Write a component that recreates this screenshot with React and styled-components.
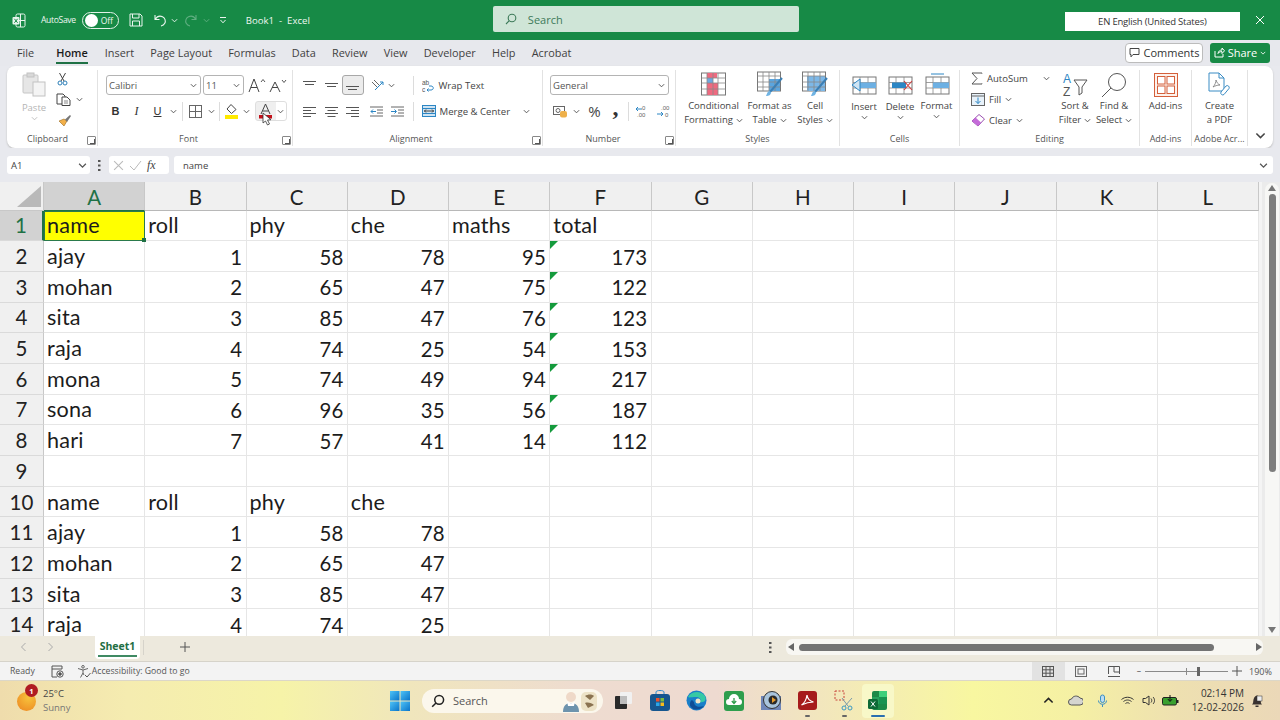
import React from 'react';
import styled, { createGlobalStyle } from 'styled-components';

const Global = createGlobalStyle`
  html, body { margin: 0; padding: 0; background: #fff; }
  * { box-sizing: border-box; }
  svg { display: block; flex: none; }
`;
const UI = `"Open Sans", "Noto Sans", sans-serif`;

const Page = styled.div`
  width: 1280px; height: 720px; overflow: hidden; display: flex; flex-direction: column;
  font-family: ${UI}; background: #e8e9ee; color: #333;
`;
/* ---- title bar ---- */
const TitleBar = styled.header`
  height: 40px; background: #178a46; display: flex; align-items: center; color: #fff; flex: none;
`;
const TitleItem = styled.div`
  margin-left: ${p => p.$ml || 0}px; display: flex; align-items: center; font-size: ${p => p.$fs || 8.6}px; white-space: nowrap; color: #eef7f1;
`;
const AutoSaveText = styled.span` letter-spacing: -0.35px; `;
const Toggle = styled.div`
  width: 37px; height: 17px; border: 1px solid #e3f1e8; border-radius: 9px; margin-left: 6px; display: flex; align-items: center;
  padding-left: 2px; gap: 3px; font-size: 8.5px; color: #eef7f1;
  &::before { content: ''; width: 13px; height: 13px; border-radius: 50%; background: #fff; }
`;
const SearchBox = styled.div`
  width: 306px; height: 26px; margin-left: 183px; background: #cfe5d7; border-radius: 2px; display: flex; align-items: center;
  padding-left: 12px; gap: 11px; font-size: 11px; color: #3d7a59; position: relative; top: -1px;
`;
const LangBox = styled.div`
  width: 175px; height: 19px; margin-left: 266px; background: #fff; color: #333; font-size: 9.5px; display: flex; align-items: center;
  justify-content: center; letter-spacing: -0.2px; position: relative; top: 1px;
`;
const CloseBtn = styled.div` margin-left: 15px; `;
/* ---- tabs ---- */
const TabRow = styled.nav`
  height: 26px; display: flex; align-items: center; padding: 0 0 1px 17px; flex: none; background: #e7e8ed;
`;
const Tab = styled.div`
  font-size: 10.9px; color: ${p => p.$active ? '#1a1a1a' : '#3f3f3f'}; font-weight: ${p => p.$active ? 600 : 400}; margin-right: ${p => p.$first ? 22 : p.$active ? 17 : 16.2}px; position: relative; white-space: nowrap;
  ${p => p.$active ? `&::after { content:''; position:absolute; left:0; right:0; bottom:-4px; height:2px; background:#1f7145; }` : ''}
`;
const TabRight = styled.div` margin-left: auto; display: flex; gap: 7px; padding-right: 10px; `;
const CommentBtn = styled.div`
  width: 78px; height: 20px; background: #fff; border: 1px solid #bcbcbc; border-radius: 4px; font-size: 11px; display: flex; align-items: center; justify-content: center; gap: 4px; color: #333;
`;
const ShareBtn = styled.div`
  width: 60px; height: 20px; background: #178a46; color: #fff; border-radius: 3px; font-size: 11px; display: flex; align-items: center; justify-content: center; gap: 3px;
`;
/* ---- ribbon ---- */
const Ribbon = styled.section`
  height: 82px; margin: 0 7px; background: #fff; border-radius: 8px; display: flex; padding-top: 4px; flex: none; box-shadow: 0 1px 2px #bbb;
`;
const Group = styled.div`
  width: ${p => p.$w}px; height: 76px; display: flex; flex-direction: column; position: relative; flex: none;
  border-right: ${p => p.$noline ? 'none' : '1px solid #e2e2e2'};
`;
const GroupBody = styled.div`
  height: 62px; display: flex; flex-direction: ${p => p.$row ? 'row' : 'column'}; padding-left: ${p => p.$pl || 0}px;
  ${p => p.$row ? 'align-items: flex-start;' : 'padding-top: 2px;'}
`;
const GroupLabel = styled.div`
  height: 14px; line-height: 14px; font-size: 9px; color: #555; text-align: center; padding-right: ${p => p.$pr || 0}px; white-space: nowrap;
`;
const Launcher = styled.div`
  position: absolute; right: 1px; bottom: 1px; width: 9px; height: 9px; border: 1px solid #888; border-top-color: #888; border-radius: 1px;
  &::after { content:''; position:absolute; right:0; bottom:0; width:4px; height:4px; border-right:1px solid #555; border-bottom:1px solid #555; }
`;
const ToolRow = styled.div`
  height: 26px; display: flex; align-items: center; gap: ${p => p.$gap || 0}px;
`;
const Combo = styled.div`
  width: ${p => p.$w}px; height: 20px; border: 1px solid #b4b4b4; border-radius: 3px; display: flex; align-items: center; justify-content: space-between;
  padding: 0 3px 0 2px; font-size: 9.5px; color: #555; margin-right: ${p => p.$mr || 0}px; background: #fff;
`;
const Tool = styled.div`
  width: ${p => p.$w || 21}px; height: 20px; margin-left: ${p => p.$ml || 0}px; display: flex; align-items: center; justify-content: center; font-family: "Liberation Serif", serif;
  font-size: 12px; color: #333; flex: none;
  ${p => p.$on ? 'background:#ececec; border:1px solid #a8a8a8; border-radius:3px;' : ''}
`;
const Bold = styled.span` font-family: "Liberation Sans", sans-serif; font-weight: 700; font-size: 11px; `;
const Ital = styled.span` font-style: italic; font-size: 12px; `;
const Under = styled.span` font-family: "Liberation Sans", sans-serif; font-size: 11px; text-decoration: underline; `;
const Sep = styled.div` width: 1px; height: 19px; background: #dcdcdc; margin: 0 ${p => p.$mr ?? p.$m ?? 4}px 0 ${p => p.$ml ?? p.$m ?? 4}px; flex: none; `;
const SplitBox = styled.div`
  display: flex; align-items: center; width: 32px; height: 20px; border: 1px solid #dedede; border-radius: 3px; margin-left: 3px; background: linear-gradient(90deg,#efefef 0 20px,#fff 20px); position: relative;
`;
const Cursor = styled.div` position: absolute; left: 6px; top: 10px; `;
const ToolText = styled.div`
  font-size: 9.6px; color: #444; display: flex; align-items: center; gap: 4px; white-space: nowrap; font-family: ${UI};
`;
const Large = styled.div`
  width: ${p => p.$w}px; display: flex; flex-direction: column; align-items: center; font-size: 9.5px; line-height: 14px; color: #444; flex: none; text-align: center;
  margin-left: ${p => p.$ml || 0}px;
`;
const LargeIcon = styled.div` height: ${p => p.$h || 29}px; display: flex; align-items: center; justify-content: center; margin-bottom: ${p => p.$mb ?? 0}px; `;
const LabelLine = styled.div` display: flex; align-items: center; gap: 3px; white-space: nowrap; height: 14px; `;
const PaleLine = styled(LabelLine)` color: #b5b5b5; `;
const EditRow = styled.div` height: 21px; display: flex; align-items: center; gap: ${p => p.$gap ?? 4}px; font-size: 9.5px; color: #444; white-space: nowrap; padding-left: ${p => p.$pl || 0}px; `;
const RowChev = styled.span` margin-left: ${p => p.$ml || 0}px; `;
const ClipCol = styled.div` display: flex; flex-direction: column; align-items: flex-start; margin-top: -2px; margin-left: ${p => p.$ml || 0}px; width: ${p => p.$w ? p.$w + 'px' : 'auto'}; `;
const Expander = styled.div` flex: 1; display: flex; align-items: flex-end; justify-content: center; padding-bottom: 7px; `;
/* ---- formula bar ---- */
const FormulaBar = styled.div`
  height: 34px; padding: 8px 7px 8px; display: flex; align-items: center; flex: none; font-size: 9.5px; color: #444; background: #e8e9ee;
`;
const NameBox = styled.div`
  width: 83px; height: 18px; background: #fff; border-radius: 3px; display: flex; align-items: center; justify-content: space-between; padding: 0 3px 0 4px;
`;
const Dots = styled.div` width: 19px; display: flex; justify-content: center; `;
const FxBox = styled.div`
  width: 60px; height: 18px; background: #fff; border-radius: 3px; display: flex; align-items: center; padding-left: 4px; gap: 5px; margin-right: 5px;
  font-family: "Liberation Serif", serif; font-style: italic; font-size: 12px; color: #444;
`;
const FxInput = styled.div`
  flex: 1; height: 18px; background: #fff; border-radius: 3px; display: flex; align-items: center; justify-content: space-between; padding: 0 5px 0 9px;
`;
/* ---- sheet ---- */
const SheetArea = styled.main` height: 454px; display: flex; flex: none; background: #fff; `;
const Grid = styled.div`
  width: 1262px; height: 454px; overflow: hidden; display: grid; grid-template-columns: 44px repeat(12, 101.25px) 3px; grid-auto-rows: 30.69px;
  grid-template-rows: 28.5px; align-content: start; font-family: Lato, "Liberation Sans", sans-serif; background: #fff;
`;
const Corner = styled.div`
  background: #f0f0f0; border-right: 1px solid #c8c8c8; border-bottom: 1px solid #c8c8c8; position: relative;
  &::after { content:''; position:absolute; right:2px; bottom:3px; border-style:solid; border-width:0 0 21px 24px; border-color: transparent transparent #b9b9b9 transparent; }
`;
const ColHead = styled.div`
  background: ${p => p.$active ? '#d2d2d2' : '#f0f0f0'}; color: ${p => p.$active ? '#1f7145' : '#222'};
  border-right: 1px solid #c8c8c8; border-bottom: ${p => p.$active ? '1px solid #1f7145' : '1px solid #b8b8b8'};
  display: flex; align-items: center; justify-content: center; font-size: 20.5px; padding-top: 2px;
`;
const RowHead = styled.div`
  background: ${p => p.$active ? '#d2d2d2' : '#f0f0f0'}; color: ${p => p.$active ? '#1f7145' : '#222'};
  border-right: ${p => p.$active ? '2px solid #1f7145' : '1px solid #c8c8c8'}; border-bottom: 1px solid #dadada;
  display: flex; align-items: center; justify-content: center; font-size: 20.5px;
`;
const Cell = styled.div`
  border-right: 1px solid #e6e6e6; border-bottom: 1px solid #e6e6e6; color: #1c1c1c; display: flex; align-items: center; position: relative; white-space: nowrap;
  font-size: ${p => p.$num ? 20.4 : 21.6}px; letter-spacing: ${p => p.$num ? 0 : 0.2}px;
  padding: ${p => p.$num ? '1px 3.5px 0' : '0 3px'};
  justify-content: ${p => p.$num ? 'flex-end' : 'flex-start'};
`;
const SelCell = styled(Cell)`
  background: #ffff00; outline: 1.5px solid #2a7a4c; outline-offset: -1.5px; z-index: 1;
  &::after { content:''; position:absolute; right:-2px; bottom:-2px; width:4px; height:4px; background:#1f7145; }
`;
const Flag = styled.div`
  position: absolute; left: 0; top: 0; border-style: solid; border-width: 8px 8px 0 0; border-color: #149a3c transparent transparent transparent;
`;
const BlankHead = styled.div` background: #f4f4f4; `;
const Blank = styled.div` background: #f4f4f4; `;
const VScroll = styled.div` width: 18px; height: 454px; background: #ebebeb; padding: 1px 1px 0 3px; `;
const VTrack = styled.div`
  height: 100%; background: #f7f7f5; border-radius: 7px 7px 0 0; display: flex; flex-direction: column; align-items: center; padding: 1px 0 2px;
`;
const VThumb = styled.div` width: 7px; height: 278px; background: #7d7d7d; border-radius: 4px; margin: 2px 0 auto; `;
/* ---- sheet tabs ---- */
const SheetBar = styled.div`
  height: 26px; background: #ede9dd; display: flex; align-items: center; flex: none; padding: 0 0 3px 20px; border-bottom: 1px solid #d6d3ca;
`;
const SheetTab = styled.div`
  width: 45px; height: 23px; margin-left: 41px; margin-top: 0; background: #fff; border-radius: 0 0 4px 4px; font-size: 10.5px; font-weight: 700; color: #1f6e43; display: flex; justify-content: center; padding-top: 3px; position: relative;
  &::after { content:''; position:absolute; left:3px; right:3px; bottom:2px; height:2px; background:#3f8a63; }
`;
const SheetSep = styled.div` width: 1px; height: 15px; background: #d6d3ca; margin-left: 3px; `;
const PlusBtn = styled.div` margin-left: 36px; `;
const SheetDots = styled.div` margin-left: 579px; `;
const HScroll = styled.div`
  margin-left: 14px; width: 477px; height: 16px; display: flex; align-items: center; background: #f8f7f3; border-radius: 6px; padding-left: 1px;
`;
const HThumb = styled.div` width: 415px; height: 7px; border-radius: 4px; background: #737373; margin: 0 41px 0 4px; `;
const ArrowGap = styled.span` margin-left: 20px; `;
/* ---- status bar ---- */
const StatusBar = styled.div`
  height: 18px; background: #f3f3f3; display: flex; align-items: center; flex: none; padding-left: 10px; font-size: 8.7px; color: #555;
`;
const StatusIcon = styled.span` margin-left: 16px; `;
const StatusAccess = styled.span` margin-left: 13px; display: flex; align-items: center; gap: 1px; `;
const StatusTail = styled.div` margin-left: auto; display: flex; align-items: center; `;
const ViewBtn = styled.div` width: 33px; height: 18px; display: flex; align-items: center; justify-content: center; background: ${p => p.$on ? '#e2e2e2' : 'transparent'}; `;
const ZoomMinus = styled.span` margin-left: 6px; `;
const Zoom = styled.div` width: 83px; height: 1px; background: #8a8a8a; margin: 0 4px; position: relative; `;
const ZoomTick = styled.div` position: absolute; left: 41px; top: -3px; width: 1px; height: 7px; background: #8a8a8a; `;
const ZoomThumb = styled.div` position: absolute; left: 52px; top: -4px; width: 3px; height: 9px; background: #666; `;
const ZoomPct = styled.div` text-align: right; padding-right: 9px; box-sizing: content-box; width: 22px; margin-left: 7px; font-size: 9px; `;
/* ---- task bar ---- */
const TaskBar = styled.footer`
  height: 40px; flex: none; display: flex; align-items: center; position: relative; font-size: 9.5px;
  background: linear-gradient(90deg, #efdcac 0%, #f5ecb0 10%, #f6f3a8 22%, #f0e6bc 32%, #eedcd0 45%, #eedad0 56%, #f4ecb4 68%, #f8f7a0 76%, #f5f0a4 84%, #eee0b0 92%, #ebd8b8 100%);
  border-top: 1px solid #dcd7c8;
`;
const Weather = styled.div` display: flex; align-items: center; padding-left: 17px; gap: 7px; width: 390px; `;
const Sun = styled.div`
  width: 19px; height: 19px; border-radius: 50%; background: radial-gradient(circle at 60% 30%, #f7c23c, #ec8420); position: relative; margin-top: 2px;
`;
const Badge = styled.div`
  position: absolute; left: 8px; top: -8px; width: 13px; height: 13px; border-radius: 50%; background: #b01c22; color: #fff; font-size: 7.5px; font-weight: 700; display: flex; align-items: center; justify-content: center;
`;
const WeatherText = styled.div` line-height: 14px; font-size: 9.5px; color: #444; `;
const SoftLine = styled.div` color: #777; `;
const TaskSearch = styled.div`
  width: 181px; height: 24px; margin-left: 12px; border-radius: 12px; background: #fbf7ec; display: flex; align-items: center; padding: 0 4px 0 9px; font-size: 11px; color: #555; gap: 8px;
`;
const TaskIcons = styled.div` display: flex; align-items: center; margin-left: 2px; `;
const TaskIcon = styled.div`
  width: ${p => p.$active ? 32 : 36.8}px; height: 34px; display: flex; align-items: center; justify-content: center; position: relative; border-radius: 4px;
  ${p => p.$active ? 'background:#f8f8c8; margin-left:-1px;' : ''}
  ${p => p.$dot ? `&::after { content:''; position:absolute; bottom:1px; left:50%; width:5px; height:2px; margin-left:-2px; border-radius:1px; background:${p.$active ? '#2a6fb0' : '#666'}; ${p.$active ? 'width:14px; margin-left:-7px;' : ''} }` : ''}
`;
const Tray = styled.div` margin-left: auto; display: flex; align-items: center; padding-right: 17px; `;
const TraySlot = styled.div` width: ${p => p.$w || 26}px; display: flex; justify-content: center; `;
const Clock = styled.div` text-align: right; font-size: 10px; line-height: 14px; color: #333; margin: -1px 7px 0 11px; white-space: nowrap; `;
const FaceSpacer = styled.div` margin-left: auto; `;

/* ---- icons ---- */
const Chev = ({ c = '#555', s = 7, up }) => <svg width={s} height={s} viewBox="0 0 8 8"><path d={up ? 'M1 5.500 4 2.500 7 5.500' : 'M1 2.500 4 5.500 7 2.500'} fill="none" stroke={c} strokeWidth="1.100" /></svg>;
const ExcelLogo = () => <svg width="14" height="15" viewBox="0 0 14 15"><rect x="4" y="1" width="9" height="13" rx="1.500" fill="none" stroke="#eaf5ee" /><path d="M8.500 1v13M4 7.500h9" stroke="#eaf5ee" /><rect x="0.500" y="4" width="7" height="7.500" rx="1" fill="#eaf5ee" /><path d="M2.400 5.800 5.600 9.800M5.600 5.800 2.400 9.800" stroke="#178a46" /></svg>;
const Save = () => <svg width="14" height="14" viewBox="0 0 14 14" fill="none" stroke="#eaf5ee"><path d="M1 1h10l2 2v10H1z" /><path d="M3.500 1v4h6.500V1M3.500 13V8h7v5" /></svg>;
const Undo = ({ c = '#eaf5ee', flip }) => <svg width="13" height="13" viewBox="0 0 13 13" fill="none" stroke={c} strokeWidth="1.100"><g transform={flip ? 'translate(13 0) scale(-1 1)' : undefined}><path d="M1 1v4.500h4.500M1.200 5.300C3 2.500 6 1.600 8.500 2.800 11 4 12 7 10.800 9.300 10 10.800 8.600 11.700 7 12" /></g></svg>;
const Qat = () => <svg width="8" height="8" viewBox="0 0 8 8" fill="none" stroke="#eaf5ee"><path d="M1 1.500h6M1.500 4 4 6.800 6.500 4" /></svg>;
const Glass = ({ c = '#3d7a59', s = 12, w = 1.100 }) => <svg width={s} height={s} viewBox="0 0 12 12" fill="none" stroke={c} strokeWidth={w}><circle cx="7" cy="5" r="3.800" /><path d="M4.300 7.700 1 11" /></svg>;
const CloseX = ({ c = '#fff', s = 10 }) => <svg width={s} height={s} viewBox="0 0 10 10"><path d="M1 1 9 9M9 1 1 9" stroke={c} strokeWidth="1" /></svg>;
const Bubble = () => <svg width="11" height="11" viewBox="0 0 11 11" fill="none" stroke="#444"><path d="M1 1.500h9v6H4L2 9.800V7.500H1z" /></svg>;
const ShareIco = () => <svg width="11" height="11" viewBox="0 0 11 11" fill="none" stroke="#fff"><path d="M1 4v6h8V7M4 6.500C4.500 4 6 3 8 3V1l2.500 2.800L8 6.500V4.600C6.300 4.600 5 5 4 6.500z" /></svg>;
const PasteIco = () => <svg width="24" height="25" viewBox="0 0 24 25"><rect x="1" y="3" width="15" height="18" rx="1" fill="#e6e6e6" stroke="#c6c6c6" /><rect x="5" y="1" width="7" height="4" fill="#d8d8d8" stroke="#c2c2c2" /><rect x="11" y="10" width="12" height="14" fill="#f4f4f4" stroke="#c2c2c2" /></svg>;
const Scissors = () => <svg width="11" height="14" viewBox="0 0 11 14" fill="none"><path d="M2.500 1 7 9M8.500 1 4 9" stroke="#444" /><circle cx="3" cy="11" r="2" stroke="#2c7fb8" /><circle cx="8" cy="11" r="2" stroke="#2c7fb8" /></svg>;
const CopyIco = () => <svg width="15" height="13" viewBox="0 0 15 13" fill="none" stroke="#444"><path d="M1 1h6l2 2v8H1z" /><path d="M6 4h5l3 3v5.500H6z" fill="#fff" /><path d="M8 8h4M8 10h4" stroke="#888" /></svg>;
const Painter = () => <svg width="15" height="14" viewBox="0 0 15 14"><path d="M2 7 7 12 10 7 7 5z" fill="#f2b04a" stroke="#9a6a1f" strokeWidth=".6" /><path d="M8 5.500 13 1l1 1-4 6z" fill="#777" /></svg>;
const GrowA = ({ up, s = 13 }) => <svg width="20" height="18" viewBox="0 0 20 18" fill="none" stroke="#444"><path d={`M2 16 7 ${s === 13 ? 3 : 6} 12 16M4 11.500h6`} /><path d={up ? 'M14 6 16 3.500 18 6' : 'M14 4 16 6.500 18 4'} strokeWidth=".9" /></svg>;
const Borders = () => <svg width="13" height="13" viewBox="0 0 13 13" fill="none" stroke="#666"><rect x=".5" y=".5" width="12" height="12" /><path d="M6.500 0v13M0 6.500h13" /></svg>;
const FillIco = () => <svg width="15" height="16" viewBox="0 0 15 16"><path d="M7 1.500 12 6.500 7.500 10.500 3 6z" fill="#fff" stroke="#444" /><rect x="1" y="12" width="13" height="4" fill="#ffea00" /></svg>;
const ColorA = () => <svg width="15" height="16" viewBox="0 0 15 16" fill="none"><path d="M3 11 7.500 1 12 11M4.500 8h6" stroke="#444" /><rect x="1" y="12" width="13" height="3.500" fill="#c3111a" /></svg>;
const Pointer = () => <svg width="10" height="14" viewBox="0 0 10 14"><path d="M1 1v10l2.500-2L5.500 13l2-1-2-4 3.500-.3z" fill="#fff" stroke="#333" strokeWidth=".8" /></svg>;
const Lines = ({ rows, a = 'c' }) => <svg width="13" height="13" viewBox="0 0 13 13" stroke="#555" strokeWidth="1">{rows.map((r, i) => <path key={i} d={`M${a === 'r' ? 13 - r : a === 'c' ? (13 - r) / 2 : 0} ${i * 3 + 2.500}h${r}`} />)}</svg>;
const VLines = ({ y }) => <svg width="13" height="13" viewBox="0 0 13 13" stroke="#555"><path d={`M0 ${y}.5h13M2 ${y + 3}.5h9`} /></svg>;
const Orient = () => <svg width="15" height="13" viewBox="0 0 15 13" fill="none"><path d="M2 3 7 8M4 1 9 6" stroke="#666" /><path d="M5 11 13 3M10 3h3v3" stroke="#2c86c4" /></svg>;
const Indent = ({ r }) => <svg width="13" height="11" viewBox="0 0 13 11" fill="none"><path d="M0 1h13M7 4h6M7 7h6M0 10h13" stroke="#666" /><path d={r ? 'M0 5.500h5M3.500 3.500l2 2-2 2' : 'M6 5.500H1M3 3.500l-2 2 2 2'} stroke="#2c86c4" /></svg>;
const WrapIco = () => <svg width="13" height="13" viewBox="0 0 13 13" fill="none"><text x="0" y="6" fontSize="6.500" fill="#555" fontFamily="Liberation Sans">ab</text><text x="0" y="12.500" fontSize="6.500" fill="#555" fontFamily="Liberation Sans">c</text><path d="M5 11h4c3 0 3-4 0-4H7M6.500 9.500 5 11l1.500 1.500" stroke="#2c86c4" /></svg>;
const MergeIco = () => <svg width="14" height="12" viewBox="0 0 14 12"><rect x=".5" y=".5" width="13" height="11" fill="#cfe4f3" stroke="#2c86c4" /><path d="M.5 3.500h13M.5 8.500h13" stroke="#2c86c4" /><path d="M2 6h10M4 4.500 2.500 6 4 7.500M10 4.500 11.500 6 10 7.500" stroke="#444" fill="none" /></svg>;
const Acct = () => <svg width="15" height="13" viewBox="0 0 15 13"><rect x=".5" y="1.500" width="11" height="8" fill="#fff" stroke="#666" /><circle cx="5" cy="5.500" r="2" fill="none" stroke="#666" /><rect x="7" y="6" width="7" height="6.500" rx="2" fill="#eeb04a" /></svg>;
const Comma = styled.span` font-family: "Liberation Serif", serif; font-weight: 700; font-size: 24px; line-height: 10px; height: 18px; color: #333; `;
const Percent = styled.span` font-family: ${UI}; font-size: 15px; color: #444; `;
const Dec = ({ inc }) => <svg width="14" height="14" viewBox="0 0 14 14" fill="none"><path d={inc ? 'M1 5h6M3 3 1 5l2 2' : 'M7 10H1M5 8l2 2-2 2'} stroke="#2c86c4" /><text x={inc ? 7 : 5} y="6" fontSize="6" fill="#666" fontFamily="Liberation Sans">{inc ? '0' : '.00'}</text><text x={inc ? 2 : 9} y="13" fontSize="6" fill="#666" fontFamily="Liberation Sans">{inc ? '.00' : '0'}</text></svg>;
const CondFmt = () => <svg width="25" height="25" viewBox="0 0 25 25"><rect x=".5" y="1" width="24" height="22" fill="#fff" stroke="#777" /><rect x="6" y="1" width="10" height="5" fill="#ee6a80" /><rect x="6" y="6" width="6" height="5" fill="#6ea8e0" /><rect x="6" y="11" width="11" height="6" fill="#ee6a80" /><rect x="6" y="17" width="11" height="6" fill="#ee6a80" /><path d="M6 1v22M12 1v22M17 1v22M.5 6h24M.5 11h24M.5 17h24" stroke="#888" strokeWidth=".8" /></svg>;
const TableFmt = ({ full }) => <svg width="26" height="27" viewBox="0 0 26 27"><rect x=".5" y="1" width="23" height="19" fill="#fff" stroke="#777" />{full ? <rect x="5" y="5" width="18" height="15" fill="#7db8e8" /> : <rect x="12" y="8" width="11" height="12" fill="#5ba5df" />}<path d="M.5 5h23M.5 11h23M.5 16h23M6 1v19M12 1v19M18 1v19" stroke="#888" strokeWidth=".8" /><path d="M25 7 13 21" stroke="#3b7fb5" strokeWidth="2" /><path d="M9 25c3 0 5-1 5-4l-2-1c-2 1-2 3-3 5z" fill="#6fb3e3" /></svg>;
const CellsIco = ({ kind }) => <svg width="26" height="24" viewBox="0 0 26 24"><rect x="2" y="4" width="23" height="17" fill="#fff" stroke="#777" /><path d="M2 9.500h23M2 15h23M9 4v17M17 4v17" stroke="#888" strokeWidth=".8" />
  {kind === 'ins' && <><rect x="4" y="9.500" width="21" height="5.500" fill="#6db0e3" /><path d="M9 6 1 12l8 6z" fill="#cfe4f3" stroke="#2c86c4" /></>}
  {kind === 'del' && <><rect x="5" y="9.500" width="14" height="5.500" fill="#2c86c4" /><path d="M17 8l8 9M25 8l-8 9" stroke="#d23c3c" strokeWidth="1.100" /></>}
  {kind === 'fmt' && <><rect x="9" y="9.500" width="16" height="5.500" fill="#6db0e3" /><path d="M7 1h13" stroke="#2c86c4" /></>}
</svg>;
const Sigma = () => <svg width="12" height="13" viewBox="0 0 12 13" fill="none" stroke="#555"><path d="M11 1.500V1H1l5 5.500L1 12h10v-.5" /></svg>;
const FillDown = () => <svg width="14" height="13" viewBox="0 0 14 13"><rect x=".5" y=".5" width="13" height="12" fill="#e8f2fa" stroke="#666" /><path d="M.5 3h13" stroke="#666" /><path d="M7 4.500v6M4.500 8 7 10.500 9.500 8" stroke="#2c86c4" fill="none" /></svg>;
const Eraser = () => <svg width="14" height="13" viewBox="0 0 14 13"><path d="M8 .5 13.500 5 7 12 1 7z" fill="#fff" stroke="#9a4fb0" /><path d="M1 7 4.500 3.500 10 8.500 7 12z" fill="#c46bd8" /></svg>;
const SortIco = () => <svg width="27" height="26" viewBox="0 0 27 26"><text x="1" y="11" fontSize="12" fill="#2c86c4" fontFamily="Liberation Sans">A</text><text x="1" y="24" fontSize="12" fill="#555" fontFamily="Liberation Sans">Z</text><path d="M12 8h13l-5 7v6l-3 2v-8z" fill="#fff" stroke="#555" /></svg>;
const BigGlass = () => <svg width="26" height="26" viewBox="0 0 26 26" fill="none" stroke="#555"><circle cx="16" cy="10" r="8.500" /><path d="M10 16 1 25" /></svg>;
const AddIns = () => <svg width="24" height="24" viewBox="0 0 24 24" fill="#fdf2ec" stroke="#d45f3a"><rect x=".5" y=".5" width="23" height="23" /><rect x="3.500" y="3.500" width="7.500" height="7.500" fill="#fff" /><rect x="13" y="3.500" width="7.500" height="7.500" fill="#fff" /><rect x="3.500" y="13" width="7.500" height="7.500" fill="#fff" /><rect x="13" y="13" width="7.500" height="7.500" fill="#fff" /></svg>;
const PdfIco = () => <svg width="23" height="25" viewBox="0 0 23 25" fill="none" stroke="#3a8cc4"><path d="M1 1h10l5 5v13H1z" fill="#fff" /><path d="M11 1v5h5" /><path d="M5 15c2-2 3-5 3-7 1 3 2 4 4 5-3 0-5 1-7 2z" stroke="#777" strokeWidth=".8" /><path d="M13 20l5-6a2 2 0 0 1 3 2.500l-5 6a2 2 0 0 1-3-2.500z" fill="#fff" /></svg>;
const Tick = ({ c = '#bbb' }) => <svg width="13" height="11" viewBox="0 0 13 11" fill="none" stroke={c}><path d="M1 6 5 10 12 1" /></svg>;
const VDots = () => <svg width="3" height="11" viewBox="0 0 3 11" fill="#555"><rect y="0" width="2.500" height="2" /><rect y="4.500" width="2.500" height="2" /><rect y="9" width="2.500" height="2" /></svg>;
const Tri = ({ d, c = '#777', s = 8 }) => { const p = { u: '4,1 8,7 0,7', d: '0,1 8,1 4,7', l: '7,0 7,8 1,4', r: '1,0 1,8 7,4' }[d]; return <svg width={s} height={s} viewBox="0 0 8 8"><polygon points={p} fill={c} /></svg>; };
const Angle = ({ left }) => <svg width="7" height="10" viewBox="0 0 7 10" fill="none" stroke="#aaa"><path d={left ? 'M5.500 1 1.500 5l4 4' : 'M1.500 1l4 4-4 4'} /></svg>;
const Plus = () => <svg width="10" height="10" viewBox="0 0 10 10" stroke="#555"><path d="M5 0v10M0 5h10" /></svg>;
const Macro = () => <svg width="13" height="13" viewBox="0 0 13 13" fill="none" stroke="#555"><path d="M1 1h10v3H1zM1 4v8h5" /><circle cx="9" cy="9" r="3.200" /><circle cx="9" cy="9" r="1.300" fill="#555" /></svg>;
const Access = () => <svg width="14" height="13" viewBox="0 0 14 13" fill="none" stroke="#555" strokeWidth=".9"><circle cx="6" cy="1.800" r="1.300" /><path d="M1 3.500 6 5l5-1.500M6 5v3L3.500 12.500M6 8l1 2" /><path d="M8 10l2 2 3.500-4" stroke="#444" /></svg>;
const GridView = () => <svg width="12" height="11" viewBox="0 0 12 11" fill="none" stroke="#555"><rect x=".5" y=".5" width="11" height="10" /><path d="M4 0v11M8 0v11M0 3.800h12M0 7.200h12" /></svg>;
const PageView = () => <svg width="12" height="11" viewBox="0 0 12 11" fill="none" stroke="#666"><rect x=".5" y=".5" width="11" height="10" /><rect x="3" y="3" width="6" height="5" /></svg>;
const BreakView = () => <svg width="12" height="11" viewBox="0 0 12 11" fill="none" stroke="#555"><path d="M.5 8V.5h11V8M0 10.500h12M6 .5V6M6 6h5.500" /></svg>;
const WinLogo = () => <svg width="20" height="20" viewBox="0 0 20 20"><defs><linearGradient id="wl" x1="0" y1="0" x2="1" y2="1"><stop offset="0" stopColor="#4fc3f7" /><stop offset="1" stopColor="#0a74c9" /></linearGradient></defs><rect width="9.500" height="9.500" fill="url(#wl)" /><rect x="10.500" width="9.500" height="9.500" fill="url(#wl)" /><rect y="10.500" width="9.500" height="9.500" fill="url(#wl)" /><rect x="10.500" y="10.500" width="9.500" height="9.500" fill="url(#wl)" /></svg>;
const Faces = () => <svg width="38" height="22" viewBox="0 0 38 22"><circle cx="10" cy="7" r="5" fill="#efd9c8" /><path d="M2 22c0-6 3-9 8-9s8 3 8 9z" fill="#6d93ad" /><path d="M6 11c2 3 6 3 8 0l-1 5H7z" fill="#fff" /><rect x="20" y="2" width="16" height="19" rx="5" fill="#ece2c6" /><path d="M24 6c3-2 7-2 9 0l-4 4zM24 13c3-1 7 0 9 2l-6 3z" fill="#8a7350" /></svg>;
const TaskView = () => <svg width="19" height="19" viewBox="0 0 19 19"><rect x="6" y="1" width="12" height="12" rx="1" fill="#f1f1f1" /><rect x="1" y="5" width="12" height="13" rx="1" fill="#2a2a2a" /><rect x="6" y="5" width="7" height="8" fill="#bdbdbd" /></svg>;
const StoreIco = () => <svg width="20" height="21" viewBox="0 0 20 21"><rect y="4" width="20" height="17" rx="3" fill="#16568f" /><path d="M6 4V2c0-2 8-2 8 0v2" fill="none" stroke="#2b8ad0" /><rect x="6" y="8" width="3.500" height="3.500" fill="#e8512f" /><rect x="10.500" y="8" width="3.500" height="3.500" fill="#7cbb3d" /><rect x="6" y="12.500" width="3.500" height="3.500" fill="#2aa6e8" /><rect x="10.500" y="12.500" width="3.500" height="3.500" fill="#f6bb1c" /></svg>;
const EdgeIco = () => <svg width="21" height="21" viewBox="0 0 21 21"><circle cx="10.500" cy="10.500" r="10" fill="#1a7fc9" /><path d="M2 7C5 1 15 0 19 6c2 4-1 7-5 6 2-3-1-5-4-5-4 0-7 1-8 0z" fill="#36c9a5" /><path d="M8 12c0 4 4 6 10 4-3 4-10 5-13 1-2-2-1-6 1-7z" fill="#0f4e96" /><circle cx="12" cy="11" r="2.500" fill="#f3e6c8" /></svg>;
const CloudApp = () => <svg width="20" height="20" viewBox="0 0 20 20"><rect width="20" height="20" rx="3" fill="#2e9e4d" /><path d="M5 14a3 3 0 0 1 0-6 5 5 0 0 1 10 0 3 3 0 0 1 0 6z" fill="#fff" /><path d="M10 7v5M7.800 10 10 12.500 12.200 10" stroke="#2e9e4d" strokeWidth="1.300" fill="none" /></svg>;
const MediaApp = () => <svg width="22" height="21" viewBox="0 0 22 21"><rect x="1" y="6" width="20" height="14" fill="#6f86b8" /><circle cx="12" cy="10" r="8.500" fill="#a9c4dc" stroke="#333" /><circle cx="13" cy="10" r="4.500" fill="#2a2a2a" /><path d="M12 7l4 3-4 3z" fill="#e89d2e" /></svg>;
const AcrobatApp = () => <svg width="19" height="19" viewBox="0 0 19 19"><rect width="19" height="19" rx="3" fill="#a61b1b" /><path d="M3.500 14c3-2 5-6 5.500-10 .5 4 2.500 6 6.500 7-4 0-8 1-12 3z" fill="none" stroke="#fff" strokeWidth="1.200" /></svg>;
const SnipApp = () => <svg width="20" height="21" viewBox="0 0 20 21" fill="none"><rect x="1" y="1" width="9" height="9" stroke="#c8423a" strokeDasharray="2 1.500" /><path d="M8 8 14 16M18 8l-7 8" stroke="#7a9aa8" /><circle cx="10" cy="18" r="2" stroke="#3a9ac4" /><circle cx="16" cy="18" r="2" stroke="#3a9ac4" /></svg>;
const ExcelApp = () => <svg width="20" height="20" viewBox="0 0 20 20"><rect x="4" y="0" width="15" height="19" rx="2" fill="#1d8a47" /><rect x="11" y="0" width="8" height="6" fill="#3fcf7a" /><rect x="4" y="6" width="8" height="7" fill="#27a35c" /><rect x="11" y="6" width="8" height="7" fill="#1a9350" /><rect x="0" y="8" width="10" height="10" rx="1.500" fill="#0e6a37" /><path d="M3 10.500 7 15.500M7 10.500 3 15.500" stroke="#fff" /></svg>;
const CloudTray = () => <svg width="15" height="11" viewBox="0 0 15 11"><path d="M3.500 10a3 3 0 0 1 0-6 5 5 0 0 1 8.500-1 3.500 3.500 0 0 1 0 7z" fill="#d5d5d0" stroke="#555" /></svg>;
const Mic = () => <svg width="11" height="14" viewBox="0 0 11 14" fill="none" stroke="#3a8fc4"><rect x="3.500" y="1" width="4" height="7.500" rx="2" fill="#bcdcf0" /><path d="M1.500 6.500c0 5 8 5 8 0M5.500 10.500V13" /></svg>;
const Wifi = () => <svg width="13" height="10" viewBox="0 0 13 10" fill="none" stroke="#333"><path d="M.5 3.500c3.500-3 8.500-3 12 0M2.500 5.500c2.500-2 5.500-2 8 0M4.500 7.500c1-1 3-1 4 0" /></svg>;
const Volume = () => <svg width="14" height="11" viewBox="0 0 14 11" fill="none" stroke="#333"><path d="M1 3.500h2.500L7 1v9L3.500 7.500H1zM9 3.500c1 1 1 3 0 4M11 2c2 2 2 5 0 7" /></svg>;
const Battery = () => <svg width="17" height="11" viewBox="0 0 17 11"><rect x=".5" y="2.500" width="14" height="7.500" rx="1.500" fill="#3aa02e" stroke="#222" /><rect x="15" y="5" width="1.500" height="3" fill="#222" /><path d="M8 0v6M5.800 4 8 6.500 10.200 4" stroke="#111" fill="none" /></svg>;
const Bell = () => <svg width="12" height="14" viewBox="0 0 12 14"><path d="M1 10.500c1.500-1 1-3 1.500-5C3 3 5 1.500 6 1.500S9 3 9.500 5.500c.5 2 0 4 1.500 5z" fill="#3a3230" /><rect x="4.500" y="11.500" width="3" height="1.500" fill="#3a3230" /><rect x="6" y="2" width="5" height="5" fill="#eee" stroke="#333" strokeWidth=".5" /></svg>;

/* ---- data ---- */
const COLS = 'ABCDEFGHIJKL'.split('');
const ROWS = [
  ['name', 'roll', 'phy', 'che', 'maths', 'total'],
  ['ajay', 1, 58, 78, 95, 173], ['mohan', 2, 65, 47, 75, 122], ['sita', 3, 85, 47, 76, 123], ['raja', 4, 74, 25, 54, 153],
  ['mona', 5, 74, 49, 94, 217], ['sona', 6, 96, 35, 56, 187], ['hari', 7, 57, 41, 14, 112], [],
  ['name', 'roll', 'phy', 'che'], ['ajay', 1, 58, 78], ['mohan', 2, 65, 47], ['sita', 3, 85, 47], ['raja', 4, 74, 25],
];
const TABS = ['Insert', 'Page Layout', 'Formulas', 'Data', 'Review', 'View', 'Developer', 'Help', 'Acrobat'];

const Sheet = () => (
  <SheetArea>
    <Grid>
      <Corner />
      {COLS.map(c => <ColHead key={c} $active={c === 'A'}>{c}</ColHead>)}
      <BlankHead />
      {ROWS.map((row, r) => (
        <React.Fragment key={r}>
          <RowHead $active={r === 0}>{r + 1}</RowHead>
          {COLS.map((c, i) => {
            const v = row[i];
            const num = typeof v === 'number';
            const Comp = r === 0 && i === 0 ? SelCell : Cell;
            return <Comp key={c} $num={num}>{i === 5 && r >= 1 && r <= 7 && <Flag />}{v}</Comp>;
          })}
          <Blank />
        </React.Fragment>
      ))}
    </Grid>
    <VScroll>
      <VTrack>
        <Tri d="u" />
        <VThumb />
        <Tri d="d" />
      </VTrack>
    </VScroll>
  </SheetArea>
);

const RibbonBar = () => (
  <Ribbon>
    <Group $w={91}>
      <GroupBody $row $pl={15}>
        <Large $w={24}>
          <LargeIcon $h={29} $mb={2}><PasteIco /></LargeIcon>
          <PaleLine>Paste</PaleLine>
          <Chev c="#c0c0c0" />
        </Large>
        <ClipCol $ml={10}>
          <EditRow $pl={1}><Scissors /></EditRow>
          <EditRow $gap={5}><CopyIco /><Chev /></EditRow>
          <EditRow $pl={1}><Painter /></EditRow>
        </ClipCol>
      </GroupBody>
      <GroupLabel $pr={9}>Clipboard</GroupLabel>
      <Launcher />
    </Group>
    <Group $w={195}>
      <GroupBody $pl={8}>
        <ToolRow>
          <Combo $w={95} $mr={2}>Calibri<Chev /></Combo>
          <Combo $w={41} $mr={2}>11<Chev /></Combo>
          <Tool $w={22}><GrowA up /></Tool>
          <Tool $w={20}><GrowA s={11} /></Tool>
        </ToolRow>
        <ToolRow>
          <Tool $ml={-1}><Bold>B</Bold></Tool>
          <Tool><Ital>I</Ital></Tool>
          <Tool><Under>U</Under></Tool>
          <Tool $w={11}><Chev /></Tool>
          <Sep $m={3} />
          <Tool $w={18}><Borders /></Tool>
          <Tool $w={14}><Chev /></Tool>
          <Sep $m={1} />
          <Tool $w={20}><FillIco /></Tool>
          <Tool $w={11}><Chev /></Tool>
          <SplitBox>
            <Tool $w={18}><ColorA /></Tool>
            <Tool $w={12}><Chev /></Tool>
            <Cursor><Pointer /></Cursor>
          </SplitBox>
        </ToolRow>
      </GroupBody>
      <GroupLabel $pr={13}>Font</GroupLabel>
      <Launcher />
    </Group>
    <Group $w={250}>
      <GroupBody $pl={6}>
        <ToolRow>
          <Tool $w={21.5}><VLines y={2} /></Tool>
          <Tool $w={21.5}><VLines y={4} /></Tool>
          <Tool $w={21.5} $on><VLines y={7} /></Tool>
          <Tool $w={16} $ml={6}><Orient /></Tool>
          <Tool $w={12}><Chev /></Tool>
          <Sep $ml={15} $mr={8} />
          <ToolText><WrapIco />Wrap Text</ToolText>
        </ToolRow>
        <ToolRow>
          <Tool $w={21.5}><Lines rows={[13, 8, 13, 8]} a="l" /></Tool>
          <Tool $w={21.5}><Lines rows={[13, 8, 13, 8]} /></Tool>
          <Tool $w={21.5}><Lines rows={[13, 8, 13, 8]} a="r" /></Tool>
          <Tool $w={21.5} $ml={2}><Indent /></Tool>
          <Tool $w={21.5}><Indent r /></Tool>
          <Sep $ml={4} $mr={8} />
          <ToolText><MergeIco />Merge &amp; Center<RowChev $ml={9}><Chev /></RowChev></ToolText>
        </ToolRow>
      </GroupBody>
      <GroupLabel $pr={13}>Alignment</GroupLabel>
      <Launcher />
    </Group>
    <Group $w={133}>
      <GroupBody $pl={7}>
        <ToolRow><Combo $w={119}>General<Chev /></Combo></ToolRow>
        <ToolRow>
          <Tool $ml={0}><Acct /></Tool>
          <Tool $w={10}><Chev /></Tool>
          <Tool $ml={3}><Percent>%</Percent></Tool>
          <Tool><Comma>,</Comma></Tool>
          <Sep $m={2} />
          <Tool><Dec inc /></Tool>
          <Tool><Dec /></Tool>
        </ToolRow>
      </GroupBody>
      <GroupLabel $pr={12}>Number</GroupLabel>
      <Launcher />
    </Group>
    <Group $w={164}>
      <GroupBody $row $pl={9}>
        <Large $w={57}><LargeIcon><CondFmt /></LargeIcon><LabelLine>Conditional</LabelLine><LabelLine>Formatting <Chev /></LabelLine></Large>
        <Large $w={55}><LargeIcon><TableFmt /></LargeIcon><LabelLine>Format as</LabelLine><LabelLine>Table <Chev /></LabelLine></Large>
        <Large $w={36}><LargeIcon><TableFmt full /></LargeIcon><LabelLine>Cell</LabelLine><LabelLine>Styles <Chev /></LabelLine></Large>
      </GroupBody>
      <GroupLabel>Styles</GroupLabel>
    </Group>
    <Group $w={120}>
      <GroupBody $row $pl={6}>
        <Large $w={36}><LargeIcon $h={30}><CellsIco kind="ins" /></LargeIcon><LabelLine>Insert</LabelLine><Chev /></Large>
        <Large $w={36}><LargeIcon $h={30}><CellsIco kind="del" /></LargeIcon><LabelLine>Delete</LabelLine><Chev /></Large>
        <Large $w={37}><LargeIcon $h={29}><CellsIco kind="fmt" /></LargeIcon><LabelLine>Format</LabelLine><Chev /></Large>
      </GroupBody>
      <GroupLabel>Cells</GroupLabel>
    </Group>
    <Group $w={180}>
      <GroupBody $row $pl={11}>
        <ClipCol $w={84}>
          <EditRow><Sigma />AutoSum<RowChev $ml={11}><Chev /></RowChev></EditRow>
          <EditRow><FillDown />Fill <Chev /></EditRow>
          <EditRow><Eraser />Clear <Chev /></EditRow>
        </ClipCol>
        <Large $w={40}><LargeIcon><SortIco /></LargeIcon><LabelLine>Sort &amp;</LabelLine><LabelLine>Filter <Chev /></LabelLine></Large>
        <Large $w={38}><LargeIcon><BigGlass /></LargeIcon><LabelLine>Find &amp;</LabelLine><LabelLine>Select <Chev /></LabelLine></Large>
      </GroupBody>
      <GroupLabel>Editing</GroupLabel>
    </Group>
    <Group $w={52}>
      <GroupBody $row>
        <Large $w={51}><LargeIcon><AddIns /></LargeIcon><LabelLine>Add-ins</LabelLine></Large>
      </GroupBody>
      <GroupLabel>Add-ins</GroupLabel>
    </Group>
    <Group $w={56}>
      <GroupBody $row>
        <Large $w={55}><LargeIcon><PdfIco /></LargeIcon><LabelLine>Create</LabelLine><LabelLine>a PDF</LabelLine></Large>
      </GroupBody>
      <GroupLabel>Adobe Acr...</GroupLabel>
    </Group>
    <Expander><Chev s={11} c="#444" /></Expander>
  </Ribbon>
);

export default function App() {
  return (
    <Page>
      <Global />
      <TitleBar>
        <TitleItem $ml={12}><ExcelLogo /></TitleItem>
        <TitleItem $ml={15}><AutoSaveText>AutoSave</AutoSaveText><Toggle>Off</Toggle></TitleItem>
        <TitleItem $ml={10}><Save /></TitleItem>
        <TitleItem $ml={11}><Undo /></TitleItem>
        <TitleItem $ml={4}><Chev c="#eaf5ee" /></TitleItem>
        <TitleItem $ml={6}><Undo c="#5fae80" flip /></TitleItem>
        <TitleItem $ml={6}><Chev c="#5fae80" /></TitleItem>
        <TitleItem $ml={9}><Qat /></TitleItem>
        <TitleItem $ml={19} $fs={9.6}>Book1&nbsp; -&nbsp; Excel</TitleItem>
        <SearchBox><Glass />Search</SearchBox>
        <LangBox>EN English (United States)</LangBox>
        <CloseBtn><CloseX /></CloseBtn>
      </TitleBar>
      <TabRow>
        <Tab $first>File</Tab>
        <Tab $active>Home</Tab>
        {TABS.map(t => <Tab key={t}>{t}</Tab>)}
        <TabRight>
          <CommentBtn><Bubble />Comments</CommentBtn>
          <ShareBtn><ShareIco />Share<Chev c="#fff" s={6} /></ShareBtn>
        </TabRight>
      </TabRow>
      <RibbonBar />
      <FormulaBar>
        <NameBox>A1<Chev s={9} /></NameBox>
        <Dots><VDots /></Dots>
        <FxBox><CloseX c="#bbb" s={11} /><Tick />fx</FxBox>
        <FxInput>name<Chev s={9} /></FxInput>
      </FormulaBar>
      <Sheet />
      <SheetBar>
        <Angle left />
        <ArrowGap><Angle /></ArrowGap>
        <SheetTab>Sheet1</SheetTab>
        <SheetSep />
        <PlusBtn><Plus /></PlusBtn>
        <SheetDots><VDots /></SheetDots>
        <HScroll>
          <Tri d="l" c="#666" />
          <HThumb />
          <Tri d="r" c="#666" />
        </HScroll>
      </SheetBar>
      <StatusBar>
        Ready
        <StatusIcon><Macro /></StatusIcon>
        <StatusAccess><Access />Accessibility: Good to go</StatusAccess>
        <StatusTail>
          <ViewBtn $on><GridView /></ViewBtn>
          <ViewBtn><PageView /></ViewBtn>
          <ViewBtn><BreakView /></ViewBtn>
          <ZoomMinus>–</ZoomMinus>
          <Zoom><ZoomTick /><ZoomThumb /></Zoom>
          <Plus />
          <ZoomPct>190%</ZoomPct>
        </StatusTail>
      </StatusBar>
      <TaskBar>
        <Weather>
          <Sun><Badge>1</Badge></Sun>
          <WeatherText>25°C<SoftLine>Sunny</SoftLine></WeatherText>
        </Weather>
        <WinLogo />
        <TaskSearch><Glass c="#222" s={14} w={1.300} />Search<FaceSpacer /><Faces /></TaskSearch>
        <TaskIcons>
          <TaskIcon><TaskView /></TaskIcon>
          <TaskIcon><StoreIco /></TaskIcon>
          <TaskIcon><EdgeIco /></TaskIcon>
          <TaskIcon><CloudApp /></TaskIcon>
          <TaskIcon><MediaApp /></TaskIcon>
          <TaskIcon $dot><AcrobatApp /></TaskIcon>
          <TaskIcon $dot><SnipApp /></TaskIcon>
          <TaskIcon $dot $active><ExcelApp /></TaskIcon>
        </TaskIcons>
        <Tray>
          <TraySlot $w={26}><Chev c="#222" s={11} up /></TraySlot>
          <TraySlot $w={28}><CloudTray /></TraySlot>
          <TraySlot $w={26}><Mic /></TraySlot>
          <TraySlot $w={23.500}><Wifi /></TraySlot>
          <TraySlot $w={21}><Volume /></TraySlot>
          <TraySlot $w={21}><Battery /></TraySlot>
          <Clock>02:14 PM<br />12-02-2026</Clock>
          <Bell />
        </Tray>
      </TaskBar>
    </Page>
  );
}
